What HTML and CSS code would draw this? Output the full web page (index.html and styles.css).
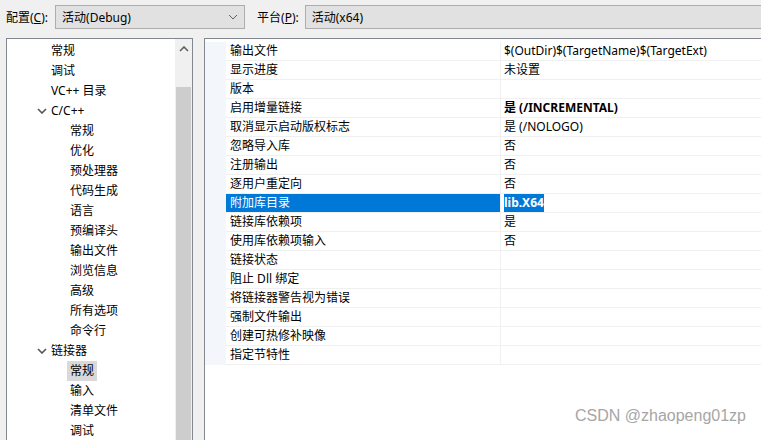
FILE: index.html
```html
<!DOCTYPE html>
<html>
<head>
<link rel="stylesheet" href="styles.css">
</head>
<body>
<div class="toolbar">
  <span class="label">配置(<u>C</u>):</span>
  <div class="combo config">
    <span>活动(Debug)</span>
    <svg class="chev" width="10" height="6" viewBox="0 0 10 6"><path d="M1 1 L5 5 L9 1" fill="none" stroke="#606060" stroke-width="1"/></svg>
  </div>
  <span class="label plat">平台(<u>P</u>):</span>
  <div class="combo platform"><span>活动(x64)</span></div>
</div>

<div class="panels">
  <div class="tree">
    <div class="tree-items">
      <div class="item l1">常规</div>
      <div class="item l1">调试</div>
      <div class="item l1">VC++ 目录</div>
      <div class="item l1 open"><svg class="arrow" width="10" height="6" viewBox="0 0 10 6"><path d="M1 1 L5 5 L9 1" fill="none" stroke="#555" stroke-width="1.6"/></svg>C/C++</div>
      <div class="item l2">常规</div>
      <div class="item l2">优化</div>
      <div class="item l2">预处理器</div>
      <div class="item l2">代码生成</div>
      <div class="item l2">语言</div>
      <div class="item l2">预编译头</div>
      <div class="item l2">输出文件</div>
      <div class="item l2">浏览信息</div>
      <div class="item l2">高级</div>
      <div class="item l2">所有选项</div>
      <div class="item l2">命令行</div>
      <div class="item l1 open"><svg class="arrow" width="10" height="6" viewBox="0 0 10 6"><path d="M1 1 L5 5 L9 1" fill="none" stroke="#555" stroke-width="1.6"/></svg>链接器</div>
      <div class="item l2"><span class="sel">常规</span></div>
      <div class="item l2">输入</div>
      <div class="item l2">清单文件</div>
      <div class="item l2">调试</div>
    </div>
    <div class="scrollbar">
      <div class="up"><svg width="10" height="6" viewBox="0 0 10 6"><path d="M1 5 L5 1 L9 5" fill="none" stroke="#606060" stroke-width="1.6"/></svg></div>
      <div class="thumb"></div>
    </div>
  </div>

  <div class="grid">
    <div class="row"><div class="gut"></div><div class="name">输出文件</div><div class="val">$(OutDir)$(TargetName)$(TargetExt)</div></div>
    <div class="row"><div class="gut"></div><div class="name">显示进度</div><div class="val">未设置</div></div>
    <div class="row"><div class="gut"></div><div class="name">版本</div><div class="val"></div></div>
    <div class="row"><div class="gut"></div><div class="name">启用增量链接</div><div class="val bold">是 (/INCREMENTAL)</div></div>
    <div class="row"><div class="gut"></div><div class="name">取消显示启动版权标志</div><div class="val">是 (/NOLOGO)</div></div>
    <div class="row"><div class="gut"></div><div class="name">忽略导入库</div><div class="val">否</div></div>
    <div class="row"><div class="gut"></div><div class="name">注册输出</div><div class="val">否</div></div>
    <div class="row"><div class="gut"></div><div class="name">逐用户重定向</div><div class="val">否</div></div>
    <div class="row active"><div class="gut"></div><div class="name">附加库目录</div><div class="val bold"><span class="edit">lib.X64</span></div></div>
    <div class="row"><div class="gut"></div><div class="name">链接库依赖项</div><div class="val">是</div></div>
    <div class="row"><div class="gut"></div><div class="name">使用库依赖项输入</div><div class="val">否</div></div>
    <div class="row"><div class="gut"></div><div class="name">链接状态</div><div class="val"></div></div>
    <div class="row"><div class="gut"></div><div class="name">阻止 Dll 绑定</div><div class="val"></div></div>
    <div class="row"><div class="gut"></div><div class="name">将链接器警告视为错误</div><div class="val"></div></div>
    <div class="row"><div class="gut"></div><div class="name">强制文件输出</div><div class="val"></div></div>
    <div class="row"><div class="gut"></div><div class="name">创建可热修补映像</div><div class="val"></div></div>
    <div class="row"><div class="gut"></div><div class="name">指定节特性</div><div class="val"></div></div>
    <div class="watermark">CSDN @zhaopeng01zp</div>
  </div>
</div>
</body>
</html>
```

FILE: styles.css
```css
* {box-sizing: border-box;}

body {
  margin: 0;
  height: 440px;
  overflow: hidden;
  background-color: #f0f0f0;
  font-family: "Noto Sans", "Noto Sans CJK SC", sans-serif;
  font-size: 12px;
  color: #000;
}

.toolbar {
  display: flex;
  align-items: center;
  height: 34px;
  padding: 0 0 0 6px;
}

.label {
  margin-right: 7px;
}

.label.plat {
  margin-left: 12px;
  margin-right: 6px;
}

.combo {
  display: flex;
  align-items: center;
  justify-content: space-between;
  height: 24px;
  padding: 0 6px 0 6px;
  background-color: #e1e1e1;
  border: 1px solid #adadad;
}

.combo.config {
  width: 190px;
}

.combo.platform {
  flex: 1;
  border-right: none;
}

.panels {
  display: flex;
  padding-left: 6px;
  margin-top: 4px;
  gap: 11px;
  height: 420px;
}

.tree {
  display: flex;
  width: 187px;
  background: #fff;
  border: 1px solid #828790;
  border-bottom: none;
}

.tree-items {
  flex: 1;
  padding-top: 2px;
}

.item {
  height: 20px;
  line-height: 20px;
  white-space: nowrap;
  display: flex;
  align-items: center;
}

.item.l1 {
  padding-left: 44px;
}

.item.l2 {
  padding-left: 63px;
}

.item.open {
  padding-left: 30px;
}

.item .arrow {
  margin-right: 4px;
}

.sel {
  background: #d9d9d9;
  padding: 0 3px;
  margin-left: -3px;
  line-height: 20px;
}

.scrollbar {
  width: 17px;
  background: #f0f0f0;
  display: flex;
  flex-direction: column;
}

.scrollbar .up {
  height: 17px;
  display: flex;
  align-items: center;
  justify-content: center;
  margin-top: 1px;
}

.scrollbar .thumb {
  margin: 30px 1px 0 1px;
  flex: 1;
  background: #cdcdcd;
}

.grid {
  position: relative;
  flex: 1;
  background: #fff;
  border-left: 1px solid #828790;
  border-top: 1px solid #828790;
  padding-top: 3px;
}

.row {
  display: flex;
  height: 19px;
  line-height: 18px;
}

.gut {
  width: 21px;
  background: #f3f6fb;
}

.name {
  width: 274px;
  padding-left: 4px;
  border-bottom: 1px solid #f0f0f0;
  white-space: nowrap;
}

.val {
  flex: 1;
  padding-left: 3px;
  border-left: 1px solid #f0f0f0;
  border-bottom: 1px solid #f0f0f0;
  white-space: nowrap;
}

.val.bold {
  font-weight: bold;
}

.row.active .name {
  background: #0078d7;
  color: #fff;
}

.edit {
  background: #0078d7;
  color: #fff;
  display: inline-block;
  line-height: 18px;
}

.watermark {
  position: absolute;
  right: 15px;
  top: 368px;
  font-family: "Liberation Sans", Arial, sans-serif;
  font-size: 16px;
  color: #a6a6a6;
  text-shadow: 0 0 2px #fff;
}
```
